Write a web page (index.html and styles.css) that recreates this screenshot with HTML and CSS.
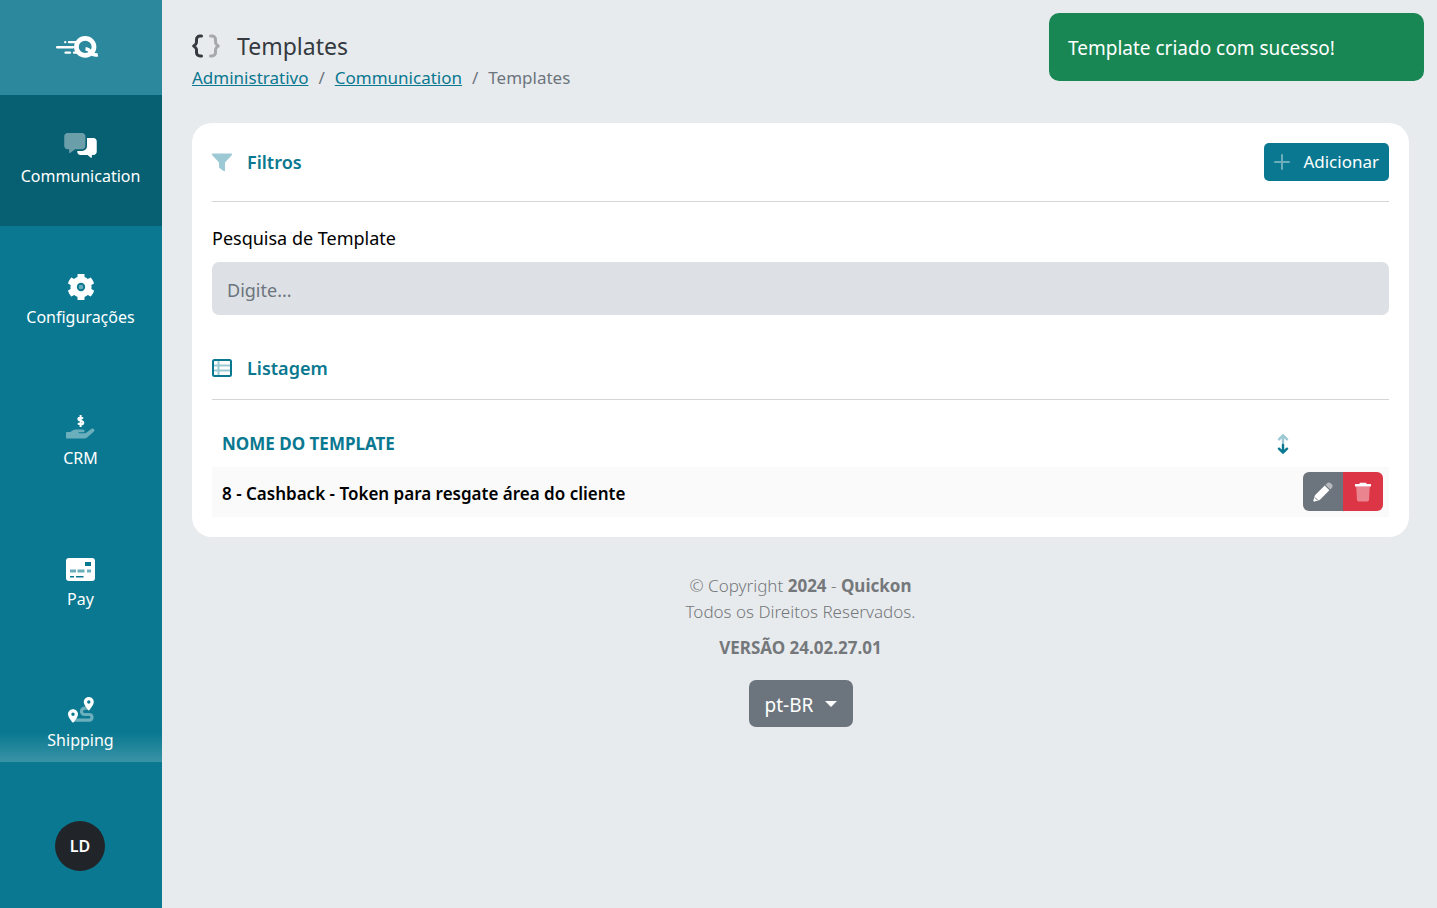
FILE: index.html
```html
<!DOCTYPE html>
<html lang="pt-BR">
<head>
<meta charset="UTF-8">
<meta name="viewport" content="width=device-width, initial-scale=1.0">
<title>Templates</title>
<link rel="stylesheet" href="styles.css">
</head>
<body>
<div class="app">
    <aside class="sidebar">
        <a href="#" class="logo" aria-label="Quickon">
            <svg width="43" height="24" viewBox="0 0 43 24" fill="none" stroke="#fff" stroke-linecap="round">
                <path d="M1.200 11.200H17" stroke-width="2.400"/>
                <path d="M13 6.200H20M9.200 6.200h.1M9.500 16.700H14M18 16.700H20" stroke-width="2.300"/>
                <ellipse cx="29.200" cy="10.900" rx="8.800" ry="8.500" stroke-width="4.700"/>
                <path d="M29.500 12.800c3 .3 4.300 1.900 5.600 3.700s3.400 3 6.700 2.300" stroke-width="3.600" stroke-linecap="butt"/>
            </svg>
        </a>
        <nav class="menu">
            <a href="#" class="menu-item active">
                <svg width="33" height="26" viewBox="0 0 640 512" fill="#fff">
                    <path opacity=".4" d="M352 0H64C28.700 0 0 28.700 0 64v192c0 35.300 28.700 64 64 64h32v64c0 9.800 11.200 15.500 19.100 9.700L213.300 320H352c35.300 0 64-28.700 64-64V64c0-35.300-28.700-64-64-64z"/>
                    <path d="M576 96H448v160c0 53-43 96-96 96H256v16c0 35.300 28.700 64 64 64h138.700l66.100 53.700c7.900 5.800 19.100.1 19.100-9.700v-44h32c35.300 0 64-28.700 64-64V160c0-35.300-28.700-64-64-64z"/>
                </svg>
                <span>Communication</span>
            </a>
            <a href="#" class="menu-item">
                <svg width="28" height="26" viewBox="0 0 512 512" preserveAspectRatio="xMidYMid slice">
                    <path fill="#fff" d="M487.400 315.700l-42.600-24.600c4.300-23.200 4.300-47 0-70.200l42.600-24.600c4.900-2.800 7.100-8.600 5.500-14-11.100-35.600-30-67.800-54.700-94.600-3.800-4.100-10-5.100-14.800-2.300L380.800 110c-17.900-15.400-38.500-27.300-60.800-35.100V25.800c0-5.600-3.900-10.500-9.400-11.700-36.700-8.200-74.300-7.800-109.200 0-5.500 1.200-9.400 6.100-9.400 11.700V75c-22.200 7.900-42.800 19.800-60.800 35.100L88.700 85.500c-4.900-2.800-11-1.900-14.800 2.300-24.700 26.700-43.600 58.900-54.700 94.600-1.700 5.400.6 11.200 5.500 14L67.300 221c-4.300 23.200-4.300 47 0 70.200l-42.600 24.600c-4.900 2.800-7.100 8.600-5.500 14 11.100 35.600 30 67.800 54.700 94.600 3.800 4.100 10 5.100 14.800 2.300l42.600-24.600c17.900 15.400 38.500 27.300 60.800 35.100v49.200c0 5.600 3.900 10.500 9.400 11.700 36.700 8.200 74.300 7.800 109.200 0 5.500-1.200 9.400-6.100 9.400-11.700v-49.200c22.200-7.900 42.800-19.800 60.800-35.100l42.600 24.600c4.900 2.800 11 1.900 14.800-2.300 24.700-26.700 43.600-58.900 54.700-94.600 1.500-5.500-.7-11.300-5.600-14.100z"/>
                    <circle cx="256" cy="256" r="76" fill="#097890"/>
                    <circle cx="256" cy="256" r="42" fill="#6badbb"/>
                </svg>
                <span>Configurações</span>
            </a>
            <a href="#" class="menu-item">
                <svg width="29" height="26" viewBox="0 0 29 26" fill="#fff">
                    <path opacity=".4" d="M1 17h3.300l2.200-1.600c1-.7 2-1 3.200-1H17c2 0 2.200 2.900 0 2.900h-4c-.8 0-.8 1 0 1h5.500c.8 0 1.500-.2 2.100-.7l4.600-3.600c2-1.300 4.300.9 2.700 2.600l-6.700 5.800c-.9.700-1.900 1.100-3 1.100H1c-.6 0-1-.4-1-1V18c0-.6.400-1 1-1z"/>
                    <path d="M14.600 0v12M17 3.600c-.8-1-4.600-1.500-4.700.4 0 2.300 5 1.200 5 3.700 0 2.200-4.200 1.800-5.300.6" fill="none" stroke="#fff" stroke-width="2"/>
                </svg>
                <span>CRM</span>
            </a>
            <a href="#" class="menu-item">
                <svg width="29" height="26" viewBox="0 0 29 26">
                    <rect y="2" width="29" height="23" rx="3" fill="#fff"/>
                    <path d="M19 6h6v4h-6z" fill="#097890"/>
                    <path d="M4 13.500h6v3H4zM11.500 13.500h7v3h-7zM21 13.500h4v3h-4z" fill="#6badbb"/>
                    <path d="M4 20h4v1.500H4zM10 20h7.500v1.500H10z" fill="#097890"/>
                </svg>
                <span>Pay</span>
            </a>
            <a href="#" class="menu-item">
                <svg width="26" height="26" viewBox="0 0 26 26">
                    <path d="M6 23.200H21c4 0 4-5.700 0-5.700h-4.500c-4 0-4.400-6.400 1-6.300h2.500" fill="none" stroke="#fff" stroke-opacity=".4" stroke-width="3.200"/>
                    <path fill="#fff" fill-rule="evenodd" d="M20.800 0c2.800 0 5 2.200 5 5 0 2.400-3 6.300-4.300 8-.4.500-1 .5-1.400 0-1.300-1.700-4.300-5.600-4.300-8 0-2.800 2.200-5 5-5zm0 3.300a1.700 1.700 0 100 3.400 1.700 1.700 0 000-3.400zM5 12.200c2.800 0 5 2.200 5 5 0 2.400-3 6.300-4.300 8-.4.500-1 .5-1.400 0C3 23.500 0 19.600 0 17.200c0-2.800 2.200-5 5-5zm0 3.300a1.700 1.700 0 100 3.400 1.700 1.700 0 000-3.400z"/>
                </svg>
                <span>Shipping</span>
            </a>
        </nav>
        <div class="user">
            <button type="button" class="avatar">LD</button>
        </div>
    </aside>

    <main class="content">
        <header class="page-header">
            <h1>
                <svg width="29" height="24" viewBox="0 0 29 24" fill="none" stroke-width="3" stroke-linecap="round" stroke-linejoin="round">
                    <path stroke="#343a40" d="M9.500 2H8C6 2 4.500 3.500 4.500 5.500v2.600c0 .9-.3 1.600-.9 2.200L1.700 12l1.900 1.700c.6.600.9 1.300.9 2.200v2.600c0 2 1.500 3.500 3.500 3.500H9.500"/>
                    <path stroke="#a6a8ab" d="M18.500 2H20c2 0 3.500 1.500 3.500 3.500v2.600c0 .9.300 1.600.9 2.200l1.900 1.700-1.900 1.700c-.6.600-.9 1.300-.9 2.200v2.600c0 2-1.500 3.500-3.500 3.500H18.500"/>
                </svg>
                Templates
            </h1>
            <nav class="breadcrumb">
                <a href="#">Administrativo</a>
                <span>/</span>
                <a href="#">Communication</a>
                <span>/</span>
                <span>Templates</span>
            </nav>
        </header>

        <section class="card">
            <div class="section-title">
                <h2>
                    <svg width="20" height="20" viewBox="0 0 20 20">
                        <path fill="#9cc9d3" d="M1 1.500h18c.9 0 1.300 1 .7 1.700L13 10.500v7.800c0 .8-.9 1.200-1.500.8L7.500 16c-.3-.2-.5-.5-.5-.9v-4.600L.3 3.200C-.3 2.500.1 1.500 1 1.500z"/>
                    </svg>
                    Filtros
                </h2>
                <button type="button" class="btn-add">
                    <svg width="16" height="16" viewBox="0 0 16 16" stroke="#6badbb" stroke-width="2" stroke-linecap="round">
                        <path d="M8 1v14M1 8h14"/>
                    </svg>
                    Adicionar
                </button>
            </div>

            <div class="field">
                <label for="search">Pesquisa de Template</label>
                <input type="text" id="search" placeholder="Digite...">
            </div>

            <div class="section-title listing">
                <h2>
                    <svg width="20" height="20" viewBox="0 0 20 20" fill="none">
                        <path stroke="#9cc9d3" stroke-width="2" d="M2 7.500h16M2 12.500h16M6.500 3v14"/>
                        <rect x="1" y="2" width="18" height="16" rx="1.500" stroke="#097890" stroke-width="2"/>
                    </svg>
                    Listagem
                </h2>
            </div>

            <table class="table">
                <thead>
                    <tr>
                        <th scope="col">
                            <div class="sort">
                                NOME DO TEMPLATE
                                <button type="button" aria-label="Ordenar">
                                    <svg width="12" height="20" viewBox="0 0 12 20" fill="none" stroke-width="2.400" stroke-linecap="round" stroke-linejoin="round">
                                        <path stroke="#9cc9d3" d="M6 10V2M2 5.300l4-4 4 4"/>
                                        <path stroke="#097890" d="M6 11v7M2 14.700l4 4 4-4"/>
                                    </svg>
                                </button>
                            </div>
                        </th>
                        <td></td>
                    </tr>
                </thead>
                <tbody>
                    <tr>
                        <td>8 - Cashback - Token para resgate área do cliente</td>
                        <td class="actions">
                            <div class="btn-group">
                                <button type="button" class="btn-edit" aria-label="Editar">
                                    <svg width="20" height="20" viewBox="0 0 20 20">
                                        <path fill="#fff" d="M11.700 3.600l4.700 4.700-9.200 9.200c-.4.400-.8.600-1.300.8l-4.200 1.300c-.9.300-1.600-.4-1.300-1.300l1.300-4.200c.2-.5.400-.9.800-1.300z"/>
                                        <path fill="#b6babe" d="M12.500 2.800l1.600-1.600c1.100-1.100 2.500-1.100 3.600 0l1.100 1.100c1.100 1.100 1.100 2.500 0 3.600l-1.600 1.600z"/>
                                        <path stroke="#6c757d" d="M2 15.500l2.500 2.500" fill="none"/>
                                    </svg>
                                </button>
                                <button type="button" class="btn-delete" aria-label="Excluir">
                                    <svg width="18" height="20" viewBox="0 0 18 20" fill="#fff">
                                        <path d="M6 .8h6l.8 1.200H17v2.400H1V2h4.200z"/>
                                        <path opacity=".4" d="M2.200 4.400h13.600L15 17.800c-.1 1-.9 1.700-1.900 1.700H4.900c-1 0-1.800-.7-1.900-1.700z"/>
                                    </svg>
                                </button>
                            </div>
                        </td>
                    </tr>
                </tbody>
            </table>
        </section>

        <footer class="footer">
            <p>© Copyright <strong>2024</strong> - <strong>Quickon</strong><br>Todos os Direitos Reservados.</p>
            <p><strong>VERSÃO 24.02.27.01</strong></p>
            <div class="language">
                <select aria-label="Idioma">
                    <option>pt-BR</option>
                </select>
            </div>
        </footer>
    </main>
</div>

<div class="toast" role="status">Template criado com sucesso!</div>
</body>
</html>
```
FILE: styles.css
```css
* {
    box-sizing: border-box;
}
body {
    margin: 0;
    background-color: #e8ebee;
    color: #000;
    font-family: "Segoe UI", "Noto Sans", sans-serif;
    font-size: 16px;
    line-height: 24px;
}
button, input, select {
    font: inherit;
}
button {
    border: none;
    cursor: pointer;
}
svg {
    display: block;
    flex: none;
}
.app {
    display: flex;
    height: 100vh;
}

/* sidebar */
.sidebar {
    display: flex;
    flex-direction: column;
    flex: none;
    width: 162px;
    background-color: #097890;
}
.logo {
    display: flex;
    flex: none;
    align-items: center;
    justify-content: center;
    height: 95px;
    padding-right: 8px;
    background-color: #2c899d;
}
.menu {
    position: relative;
    display: flex;
    flex-direction: column;
    flex: 1;
    gap: 10px;
    min-height: 0;
    overflow: hidden;
}
.menu::after {
    content: "";
    position: absolute;
    left: 0;
    right: 0;
    bottom: 0;
    height: 30px;
    background-image: linear-gradient(transparent, rgba(255, 255, 255, 0.2));
}
.menu-item {
    display: flex;
    flex: none;
    flex-direction: column;
    align-items: center;
    gap: 5px;
    height: 131px;
    padding-top: 38px;
    padding-right: 1px;
    color: #fff;
    text-decoration: none;
}
.menu-item.active {
    background-color: #076072;
}
.user {
    display: flex;
    flex: none;
    justify-content: center;
    padding: 59px 2px 37px 0;
}
.avatar {
    width: 50px;
    height: 50px;
    padding: 0;
    border-radius: 50%;
    background-color: #212529;
    color: #fff;
    font-weight: 600;
}

/* page */
.content {
    flex: 1;
    min-width: 0;
    padding: 30px 28px 30px 30px;
    overflow: auto;
}
.page-header {
    margin-bottom: 29px;
}
h1 {
    display: flex;
    align-items: center;
    gap: 16px;
    margin: 0;
    color: #343a40;
    font-size: 23px;
    font-weight: 400;
    line-height: 32px;
}
.breadcrumb {
    display: flex;
    gap: 10px;
    color: #6c757d;
    font-size: 17px;
    line-height: 32px;
}
.breadcrumb a {
    color: #097890;
}
.card {
    padding: 20px;
    border-radius: 20px;
    background-color: #fff;
}
.section-title {
    display: flex;
    align-items: flex-start;
    justify-content: space-between;
    padding-bottom: 20px;
    border-bottom: 1px solid #d3d6d8;
}
h2 {
    display: flex;
    align-items: center;
    gap: 15px;
    margin: 0;
    color: #097890;
    font-size: 18px;
    font-weight: 600;
    line-height: 38px;
}
.btn-add {
    display: flex;
    align-items: center;
    gap: 13px;
    height: 38px;
    padding: 0 10px;
    border-radius: 5px;
    background-color: #097890;
    color: #fff;
    font-size: 17px;
}
.field {
    display: flex;
    flex-direction: column;
    gap: 10px;
    padding: 22px 0 34px;
    font-size: 18px;
    line-height: 28px;
}
.field input {
    height: 53px;
    padding: 2px 15px 0;
    border: none;
    border-radius: 7px;
    background-color: #dde0e5;
    color: #212529;
}
.field input::placeholder {
    color: #6c757d;
    opacity: 1;
}
.listing {
    padding-bottom: 12px;
}

/* table */
.table {
    width: 100%;
    margin-top: 20px;
    border-collapse: collapse;
    font-size: 17px;
    font-weight: 600;
}
.table th {
    padding: 0 4px 0 10px;
    color: #097890;
    font-weight: 700;
    text-align: left;
}
.table td {
    padding: 8px 10px 5px;
}
.table tbody {
    background-color: #fafafa;
}
.sort {
    display: flex;
    align-items: center;
    justify-content: space-between;
    height: 47px;
}
.sort button {
    padding: 0 4px;
    background: none;
}
.table .actions {
    width: 92px;
    padding: 5px 6px 6px;
}
.btn-group {
    display: flex;
    border-radius: 6px;
    overflow: hidden;
}
.btn-group button {
    display: flex;
    align-items: center;
    justify-content: center;
    width: 40px;
    height: 39px;
    padding: 0;
}
.btn-edit {
    background-color: #6c757d;
}
.btn-delete {
    background-color: #dc3545;
}

/* footer */
.footer {
    padding-top: 36px;
    color: #75787b;
    font-size: 17px;
    font-weight: 300;
    line-height: 26px;
    text-align: center;
}
.footer p {
    margin: 0 0 10px;
}
.footer strong {
    font-weight: 700;
}
.language {
    position: relative;
    display: inline-block;
    margin-top: 9px;
}
.language select {
    display: block;
    height: 47px;
    padding: 2px 39px 0 16px;
    border: none;
    border-radius: 7px;
    appearance: none;
    background-color: #6c757d;
    color: #fff;
    font-size: 19px;
    font-weight: 400;
}
.language::after {
    content: "";
    position: absolute;
    top: 21px;
    right: 16px;
    border: 6px solid transparent;
    border-top-color: #fff;
    border-bottom: 0;
    pointer-events: none;
}

.toast {
    position: fixed;
    top: 13px;
    right: 13px;
    width: 375px;
    padding: 21px 19px 19px;
    border-radius: 10px;
    background-color: #198754;
    color: #fff;
    font-size: 19px;
    line-height: 28px;
}
```
